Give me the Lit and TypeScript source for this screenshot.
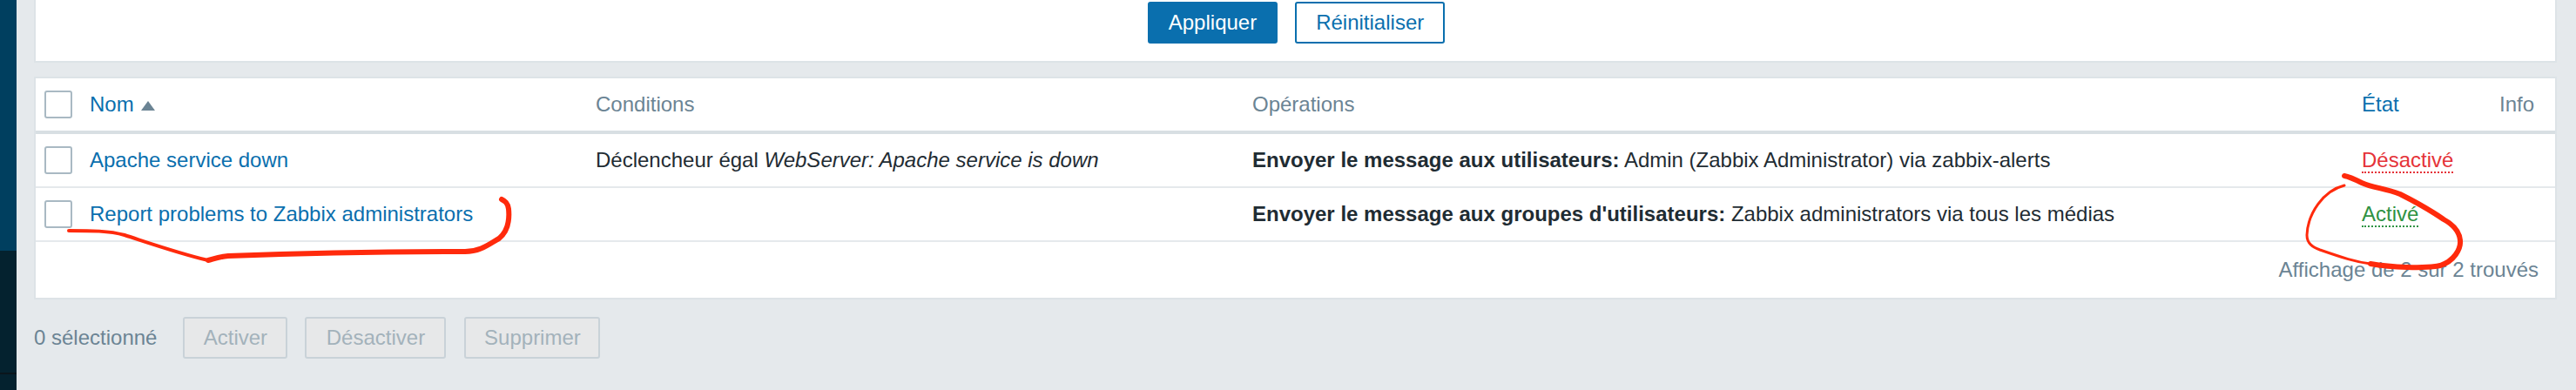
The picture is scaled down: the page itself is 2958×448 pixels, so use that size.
import { LitElement, css, html, svg } from "lit";
import { customElement } from "lit/decorators.js";

interface ActionRow {
  name: string;
  condition?: [string, string];
  opLabel: string;
  opText: string;
  enabled: boolean;
}

const ROWS: ActionRow[] = [
  {
    name: "Apache service down",
    condition: ["Déclencheur égal ", "WebServer: Apache service is down"],
    opLabel: "Envoyer le message aux utilisateurs:",
    opText: " Admin (Zabbix Administrator) via zabbix-alerts",
    enabled: false,
  },
  {
    name: "Report problems to Zabbix administrators",
    opLabel: "Envoyer le message aux groupes d'utilisateurs:",
    opText: " Zabbix administrators via tous les médias",
    enabled: true,
  },
];

@customElement("app-root")
export class AppRoot extends LitElement {
  static styles = css`
    :host {
      display: flex;
      position: relative;
      width: 2958px;
      height: 448px;
      overflow: hidden;
      background: #e5e9ec;
      font-family: "Liberation Sans", Arial, sans-serif;
      font-size: 24px;
      color: #1f2c33;
    }
    .sidebar {
      width: 19px;
      flex: none;
      display: flex;
      flex-direction: column;
      background: #04222f;
    }
    .sidebar-top {
      height: 288px;
      background: #003f5f;
    }
    .sidebar-line {
      height: 2px;
      margin-top: 140px;
      background: #0a161c;
    }
    main {
      flex: 1;
      padding: 0 22px 0 20px;
      min-width: 0;
    }
    .filter {
      height: 72px;
      box-sizing: border-box;
      padding: 2px 0 0 2px;
      display: flex;
      justify-content: center;
      align-items: flex-start;
      gap: 20px;
      background: #fff;
      border: 2px solid #dde3e7;
      border-top: 0;
    }
    button {
      height: 48px;
      box-sizing: border-box;
      padding: 0 22px;
      border: 2px solid #0a6fae;
      border-radius: 3px;
      font: inherit;
      background: #fff;
      color: #0a6fae;
    }
    button.primary {
      background: #0a6fae;
      color: #fff;
    }
    button:disabled {
      padding: 0;
      background: #e7e8e9;
      border-color: #c9d2d8;
      color: #a3b2bb;
    }
    .activate {
      width: 120px;
    }
    .deactivate {
      width: 162px;
    }
    .remove {
      width: 156px;
      margin-left: 1px;
    }
    .panel {
      margin-top: 16px;
      background: #fff;
      border: 2px solid #dde3e7;
    }
    table {
      width: 100%;
      table-layout: fixed;
      border-collapse: separate;
      border-spacing: 0;
    }
    th,
    td {
      height: 60px;
      padding: 0 0 0 12px;
      text-align: left;
      font-weight: 400;
      white-space: nowrap;
      border-bottom: 2px solid #e5e9ec;
    }
    th {
      border-bottom: 4px solid #d8dfe3;
      color: #6b8494;
    }
    th.check,
    td.check {
      padding-left: 10px;
      line-height: 0;
    }
    b {
      font-weight: 700;
    }
    .box {
      display: inline-block;
      width: 32px;
      height: 32px;
      box-sizing: border-box;
      background: #fff;
      border: 2px solid #a9b9c3;
      border-radius: 3px;
    }
    .link {
      color: #0a6fae;
    }
    .sort {
      display: inline-flex;
      align-items: center;
      gap: 8px;
    }
    .arrow {
      width: 0;
      height: 0;
      margin-top: 3px;
      border-left: 8px solid transparent;
      border-right: 8px solid transparent;
      border-bottom: 11px solid #6b8494;
    }
    .status {
      border-bottom: 2px dotted;
    }
    .off {
      color: #e53339;
    }
    .on {
      color: #2f9243;
    }
    .total {
      height: 64px;
      box-sizing: border-box;
      padding-right: 19px;
      display: flex;
      justify-content: flex-end;
      align-items: center;
      color: #6b8494;
    }
    .actions {
      margin-top: 20px;
      display: flex;
      align-items: center;
      gap: 20px;
    }
    .count {
      margin-right: 10px;
      color: #6b8494;
    }
    .ink {
      position: absolute;
      top: 0;
      left: 0;
      pointer-events: none;
    }
    .ink path {
      fill: none;
      stroke: #ff2a0c;
      stroke-linecap: round;
      stroke-linejoin: round;
    }
  `;

  private renderRow(row: ActionRow) {
    return html`<tr>
      <td class="check"><span class="box"></span></td>
      <td class="link">${row.name}</td>
      <td>${row.condition ? html`${row.condition[0]}<i>${row.condition[1]}</i>` : ""}</td>
      <td><b>${row.opLabel}</b>${row.opText}</td>
      <td>
        <span class="status ${row.enabled ? "on" : "off"}">${row.enabled ? "Activé" : "Désactivé"}</span>
      </td>
      <td></td>
    </tr>`;
  }

  // the red pen marks drawn over the screenshot
  private renderInk() {
    return html`<svg class="ink" width="2958" height="448" viewBox="0 0 2958 448">
      ${svg`
        <path stroke-width="4" d="M79 265 C105 265 125 265 143 270 C165 277 205 291 239 299" />
        <path stroke-width="6" d="M239 299 C244 298 250 295 262 294 C340 291 450 289 534 289 C552 289 562 280 573 274 C584 265 585 250 584 240 C583 233 580 231 576 229" />
        <path stroke-width="3" d="M2692 213 C2668 219 2650 245 2649 270 C2649 280 2656 284 2664 287 C2690 296 2705 301 2722 303" />
        <path stroke-width="6" d="M2722 303 C2745 307 2785 309 2802 305 C2818 300 2826 286 2825 276 C2824 265 2815 257 2806 252 C2790 241 2770 230 2756 223 C2738 216 2725 216 2712 210 C2704 206 2698 203 2692 202" />
      `}
    </svg>`;
  }

  render() {
    return html`
      <div class="sidebar">
        <div class="sidebar-top"></div>
        <div class="sidebar-line"></div>
      </div>
      <main>
        <div class="filter">
          <button class="primary">Appliquer</button>
          <button>Réinitialiser</button>
        </div>
        <div class="panel">
          <table>
            <colgroup>
              <col style="width:50px" />
              <col style="width:581px" />
              <col style="width:754px" />
              <col style="width:1274px" />
              <col style="width:158px" />
              <col />
            </colgroup>
            <thead>
              <tr>
                <th class="check"><span class="box"></span></th>
                <th class="link"><span class="sort">Nom<span class="arrow"></span></span></th>
                <th>Conditions</th>
                <th>Opérations</th>
                <th class="link">État</th>
                <th>Info</th>
              </tr>
            </thead>
            <tbody>
              ${ROWS.map((row) => this.renderRow(row))}
            </tbody>
          </table>
          <div class="total">Affichage de 2 sur 2 trouvés</div>
        </div>
        <div class="actions">
          <span class="count">0 sélectionné</span>
          <button class="activate" disabled>Activer</button>
          <button class="deactivate" disabled>Désactiver</button>
          <button class="remove" disabled>Supprimer</button>
        </div>
      </main>
      ${this.renderInk()}
    `;
  }
}
